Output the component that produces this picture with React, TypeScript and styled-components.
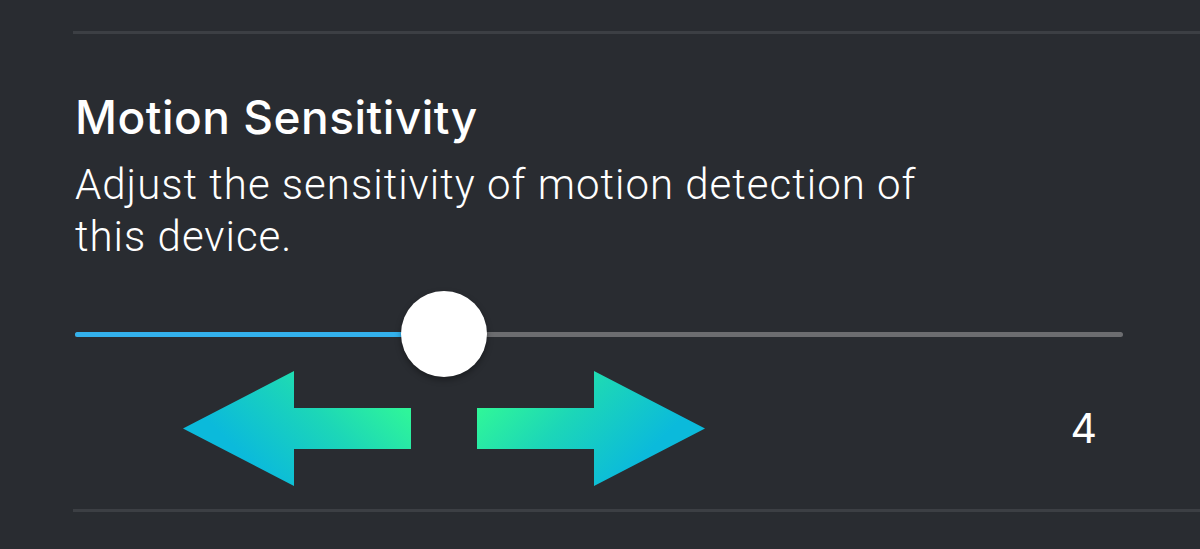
import React from 'react';
import styled, { createGlobalStyle } from 'styled-components';

const GlobalStyle = createGlobalStyle`
  html, body { margin: 0; padding: 0; background: #292c31; }
  body {
    width: 1200px;
    height: 549px;
    overflow: hidden;
    font-family: Inter, "Liberation Sans", sans-serif;
    color: #ffffff;
  }
`;

const Page = styled.div`
  width: 1200px;
  height: 549px;
  box-sizing: border-box;
  padding-top: 31px;
  display: flex;
  flex-direction: column;
`;

const Divider = styled.div<{ $top?: number }>`
  height: 3px;
  margin-left: 73px;
  margin-top: ${(p) => p.$top ?? 0}px;
  background: #3c3f44;
  flex-shrink: 0;
`;

const Section = styled.section`
  display: flex;
  flex-direction: column;
  padding: 0 77px 0 75px;
`;

const Title = styled.h2`
  margin: 55px 0 0;
  font-family: Inter, "Liberation Sans", sans-serif;
  font-weight: 500;
  font-size: 46px;
  line-height: 56px;
  letter-spacing: 0.5px;
  color: #ffffff;
`;

const Description = styled.p`
  margin: 14px 0 0;
  max-width: 870px;
  font-family: Roboto, "Liberation Sans", sans-serif;
  font-weight: 300;
  font-size: 42px;
  line-height: 52px;
  letter-spacing: 1px;
  color: #ffffff;
`;

const SliderWrap = styled.div`
  position: relative;
  height: 60px;
  margin-top: 41px;
  display: flex;
  align-items: center;
`;

const Track = styled.div`
  position: relative;
  width: 100%;
  height: 5px;
  border-radius: 3px;
  background: #6c6d70;
`;

const Fill = styled.div`
  position: absolute;
  left: 0;
  top: 0;
  bottom: 0;
  border-radius: 3px 0 0 3px;
  background: #33b1ec;
`;

const Thumb = styled.div`
  position: absolute;
  top: 50%;
  width: 86px;
  height: 86px;
  margin: -43px 0 0 -43px;
  border-radius: 50%;
  background: #ffffff;
  box-shadow: 0 3px 6px rgba(0, 0, 0, 0.35);
`;

const BottomRow = styled.div`
  display: flex;
  align-items: center;
  height: 115px;
  margin-top: 7px;
`;

const Arrows = styled.div`
  display: flex;
  align-items: center;
  gap: 66px;
  margin-left: 108px;
`;

const ArrowSvg = styled.svg<{ $flip?: boolean }>`
  display: block;
  width: 228px;
  height: 115px;
  transform: ${(p) => (p.$flip ? 'scaleX(-1)' : 'none')};
`;

const Value = styled.span`
  margin-left: auto;
  margin-right: 26px;
  font-family: Inter, "Liberation Sans", sans-serif;
  font-size: 41px;
  font-weight: 400;
  line-height: 1;
  color: #ffffff;
`;

const Arrow: React.FC<{ flip?: boolean; id: string }> = ({ flip, id }) => (
  <ArrowSvg $flip={flip} viewBox="0 0 228 115">
    <defs>
      <linearGradient id={id} gradientUnits="userSpaceOnUse" x1="215" y1="30" x2="110" y2="135">
        <stop offset="0" stopColor="#2ff59a" />
        <stop offset="0.45" stopColor="#1cd6b8" />
        <stop offset="1" stopColor="#0bbadb" />
      </linearGradient>
    </defs>
    <polygon
      points="0,57.5 111,0 111,37 228,37 228,78 111,78 111,115"
      fill={`url(#${id})`}
    />
  </ArrowSvg>
);

export default function App() {
  const fraction = 369 / 1047;
  return (
    <>
      <GlobalStyle />
      <Page>
        <Divider />
        <Section>
          <Title>Motion Sensitivity</Title>
          <Description>Adjust the sensitivity of motion detection of this device.</Description>
          <SliderWrap>
            <Track>
              <Fill style={{ width: `${fraction * 100}%` }} />
              <Thumb style={{ left: `${fraction * 100}%` }} />
            </Track>
          </SliderWrap>
          <BottomRow>
            <Arrows>
              <Arrow id="gl" />
              <Arrow id="gr" flip />
            </Arrows>
            <Value>4</Value>
          </BottomRow>
        </Section>
        <Divider $top={23} />
      </Page>
    </>
  );
}
